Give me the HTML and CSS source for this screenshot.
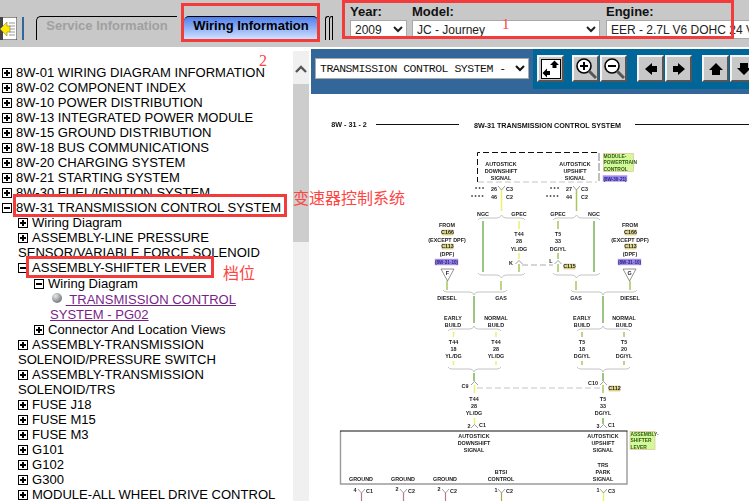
FILE: index.html
```html
<!DOCTYPE html>
<html lang="en">
<head>
<meta charset="utf-8">
<title>Wiring Information</title>
<link rel="stylesheet" href="styles.css">
</head>
<body>
<div class="page">
  <header class="header">
    <svg class="logo" width="17" height="23" viewBox="0 0 17 23">
      <rect x="0" y="0" width="17" height="23" fill="#fff" stroke="#222"/>
      <rect x="0" y="0" width="3" height="23" fill="#444"/>
      <path d="M9 6h6M9 9h6M9 12h6M9 15h6M9 18h6" stroke="#999"/>
      <path d="M0 12 L7 5 V9 H10 V15 H7 V19 Z" fill="#ffe800" stroke="#665" stroke-width=".5"/>
    </svg>
    <div class="divider"></div>
    <div class="tab tab-off">Service Information</div>
    <div class="tab tab-on">Wiring Information</div>
    <div class="stub"></div>
    <div class="stub stub-b"></div>
    <div class="field field-year">
      <label class="field-label">Year:</label>
      <select class="field-select"><option>2009</option></select>
    </div>
    <div class="field field-model">
      <label class="field-label">Model:</label>
      <select class="field-select"><option>JC - Journey</option></select>
    </div>
    <div class="field field-engine">
      <label class="field-label">Engine:</label>
      <select class="field-select"><option>EER - 2.7L V6 DOHC 24 VALVE</option></select>
    </div>
  </header>

  <main class="main">
    <nav class="tree">
      <div class="row"><span class="tg plus"></span>8W-01 WIRING DIAGRAM INFORMATION</div>
      <div class="row"><span class="tg plus"></span>8W-02 COMPONENT INDEX</div>
      <div class="row"><span class="tg plus"></span>8W-10 POWER DISTRIBUTION</div>
      <div class="row"><span class="tg plus"></span>8W-13 INTEGRATED POWER MODULE</div>
      <div class="row"><span class="tg plus"></span>8W-15 GROUND DISTRIBUTION</div>
      <div class="row"><span class="tg plus"></span>8W-18 BUS COMMUNICATIONS</div>
      <div class="row"><span class="tg plus"></span>8W-20 CHARGING SYSTEM</div>
      <div class="row"><span class="tg plus"></span>8W-21 STARTING SYSTEM</div>
      <div class="row"><span class="tg plus"></span>8W-30 FUEL/IGNITION SYSTEM</div>
      <div class="row"><span class="tg minus"></span>8W-31 TRANSMISSION CONTROL SYSTEM</div>
      <div class="row lvl1"><span class="tg plus"></span>Wiring Diagram</div>
      <div class="row lvl1"><span class="tg plus"></span>ASSEMBLY-LINE PRESSURE SENSOR/VARIABLE FORCE SOLENOID</div>
      <div class="row lvl1"><span class="tg minus"></span>ASSEMBLY-SHIFTER LEVER</div>
      <div class="row lvl2 row-gap"><span class="tg minus"></span>Wiring Diagram</div>
      <div class="row lvl3 row-gap"><span class="ball"></span> <a class="doc-link" href="#">&nbsp;TRANSMISSION CONTROL SYSTEM - PG02</a></div>
      <div class="row lvl2"><span class="tg plus"></span>Connector And Location Views</div>
      <div class="row lvl1"><span class="tg plus"></span>ASSEMBLY-TRANSMISSION SOLENOID/PRESSURE SWITCH</div>
      <div class="row lvl1"><span class="tg plus"></span>ASSEMBLY-TRANSMISSION SOLENOID/TRS</div>
      <div class="row lvl1"><span class="tg plus"></span>FUSE J18</div>
      <div class="row lvl1"><span class="tg plus"></span>FUSE M15</div>
      <div class="row lvl1"><span class="tg plus"></span>FUSE M3</div>
      <div class="row lvl1"><span class="tg plus"></span>G101</div>
      <div class="row lvl1"><span class="tg plus"></span>G102</div>
      <div class="row lvl1"><span class="tg plus"></span>G300</div>
      <div class="row lvl1"><span class="tg plus"></span>MODULE-ALL WHEEL DRIVE CONTROL</div>
    </nav>

    <div class="scrollbar">
      <div class="scroll-up">
        <svg width="16" height="12" viewBox="0 0 16 12"><path d="M3 9 L8 4 L13 9" fill="none" stroke="#555" stroke-width="2.4"/></svg>
      </div>
      <div class="scroll-thumb"></div>
    </div>

    <section class="viewer">
      <div class="toolbar">
        <div class="toolbar-left">
          <select class="page-select"><option>TRANSMISSION CONTROL SYSTEM - PG02</option></select>
        </div>
        <div class="toolbar-right">
          <button class="tool tool-first" type="button">
            <svg width="20" height="20" viewBox="0 0 20 20"><rect x=".5" y=".5" width="19" height="19" fill="#fff" stroke="#000"/><path d="M9 6 L13.5 1.5 L18 6 H15.5 V9 H11.5 V6 Z M1.5 14 L6 9.5 V12 H9 V16 H6 V18.5 Z" fill="#000"/></svg>
          </button>
          <button class="tool" type="button">
            <svg width="22" height="24" viewBox="0 0 22 24"><circle cx="9" cy="9" r="7" fill="#fff" stroke="#000" stroke-width="1.6"/><path d="M5 9h8M9 5v8" stroke="#000" stroke-width="2"/><path d="M14 14 L21 21" stroke="#555" stroke-width="3"/></svg>
          </button>
          <button class="tool tool-join" type="button">
            <svg width="22" height="24" viewBox="0 0 22 24"><circle cx="9" cy="9" r="7" fill="#fff" stroke="#000" stroke-width="1.6"/><path d="M5 9h8" stroke="#000" stroke-width="2"/><path d="M14 14 L21 21" stroke="#555" stroke-width="3"/></svg>
          </button>
          <button class="tool tool-group" type="button">
            <svg width="14" height="14" viewBox="0 0 14 14"><path d="M1 7 L8 1 V4 H13 V10 H8 V13 Z" fill="#000"/></svg>
          </button>
          <button class="tool tool-join" type="button">
            <svg width="14" height="14" viewBox="0 0 14 14"><path d="M13 7 L6 1 V4 H1 V10 H6 V13 Z" fill="#000"/></svg>
          </button>
          <button class="tool tool-group" type="button">
            <svg width="16" height="14" viewBox="0 0 16 14"><path d="M8 1 L15 8 H12 V13 H4 V8 H1 Z" fill="#000"/></svg>
          </button>
          <button class="tool tool-join" type="button">
            <svg width="16" height="14" viewBox="0 0 16 14"><path d="M8 13 L15 6 H12 V1 H4 V6 H1 Z" fill="#000"/></svg>
          </button>
        </div>
      </div>

      <svg class="diagram" width="438" height="407" viewBox="311 94 438 407">
        <!-- page heading -->
        <text class="t t-head" x="349" y="127" text-anchor="middle">8W - 31 - 2</text>
        <path class="rule" d="M376 124.5H459M635 124.5H749"/>
        <text class="t t-head" x="547.5" y="127.5" text-anchor="middle">8W-31 TRANSMISSION CONTROL SYSTEM</text>

        <!-- powertrain module -->
        <path class="dash-k" d="M597 152.5H477.5V182"/>
        <path class="dash-g" d="M478 182H597"/>
        <path class="bar" d="M599 153V181"/>
        <text class="t" x="501" y="165.500" text-anchor="middle">AUTOSTICK</text>
        <text class="t" x="501" y="172.500" text-anchor="middle">DOWNSHIFT</text>
        <text class="t" x="501" y="179.500" text-anchor="middle">SIGNAL</text>
        <text class="t" x="575" y="165.500" text-anchor="middle">AUTOSTICK</text>
        <text class="t" x="575" y="172.500" text-anchor="middle">UPSHIFT</text>
        <text class="t" x="575" y="179.500" text-anchor="middle">SIGNAL</text>
        <rect class="lab-g" x="603.500" y="153.500" width="30" height="18"/>
        <text class="t t-g" x="603.500" y="157.500">MODULE-</text>
        <text class="t t-g" x="603.500" y="164">POWERTRAIN</text>
        <text class="t t-g" x="603.500" y="170.500">CONTROL</text>
        <rect class="lab-b" x="603" y="175.500" width="24" height="6"/>
        <text class="t t-b" x="615" y="180.500" text-anchor="middle">(8W-30-21)</text>

        <!-- upper pins -->
        <text class="t t-star" x="475" y="191">***</text><text class="t" x="491" y="191">26</text><text class="t" x="506" y="191">C3</text>
        <text class="t t-star" x="471" y="199">****</text><text class="t" x="491" y="199">46</text><text class="t" x="506" y="199">C2</text>
        <text class="t t-star" x="550" y="191">***</text><text class="t" x="566" y="191">27</text><text class="t" x="581" y="191">C3</text>
        <text class="t t-star" x="546" y="199">****</text><text class="t" x="566" y="199">44</text><text class="t" x="581" y="199">C2</text>
        <path class="pin" d="M498 186L501.500 190L505 186M573 186L576.500 190L580 186"/>
        <path class="w-y" d="M501.500 190V211"/>
        <path class="w-gy" d="M576.500 190V211"/>

        <text class="t" x="483" y="216" text-anchor="middle">NGC</text>
        <text class="t" x="519" y="216" text-anchor="middle">GPEC</text>
        <text class="t" x="558" y="216" text-anchor="middle">GPEC</text>
        <text class="t" x="594" y="216" text-anchor="middle">NGC</text>
        <path class="brace" d="M478 220Q479 218 482 218H497Q500 218 501.500 215Q503 218 506 218H521Q524 218 525 220M553 220Q554 218 557 218H572Q575 218 576.500 215Q578 218 581 218H596Q599 218 600 220"/>

        <path class="w-g" d="M483 221V272M594 221V272"/>
        <path class="w-y" d="M519 221V229M519 253V259"/>
        <path class="w-gy" d="M558 221V229M558 253V259"/>
        <path class="w-gy" d="M519 264V272M558 264V272"/>
        <text class="t" x="519" y="236" text-anchor="middle">T44</text>
        <text class="t" x="519" y="243" text-anchor="middle">28</text>
        <text class="t" x="519" y="251" text-anchor="middle">YL/DG</text>
        <text class="t" x="558" y="236" text-anchor="middle">T5</text>
        <text class="t" x="558" y="243" text-anchor="middle">33</text>
        <text class="t" x="558" y="251" text-anchor="middle">DG/YL</text>
        <text class="t" x="511" y="265" text-anchor="middle">K</text>
        <text class="t" x="551" y="263" text-anchor="middle">L</text>
        <path class="pin" d="M515.500 264L519 260.500L522.500 264M554.500 264L558 260.500L561.500 264"/>
        <path class="dash-g thin" d="M522 265H553"/>
        <rect class="lab-o" x="564" y="264" width="11" height="5"/>
        <text class="t" x="569.500" y="268" text-anchor="middle">C115</text>
        <path class="brace" d="M478 273Q479 275 482 275H497Q500 275 501.500 278Q503 275 506 275H521Q524 275 525 273M553 273Q554 275 557 275H572Q575 275 576.500 278Q578 275 581 275H596Q599 275 600 273"/>

        <!-- FROM columns -->
        <g>
          <text class="t" x="447" y="227" text-anchor="middle">FROM</text>
          <rect class="lab-o" x="442" y="230" width="11" height="5"/>
          <text class="t" x="447.500" y="234" text-anchor="middle">C166</text>
          <text class="t" x="447" y="241.500" text-anchor="middle">(EXCEPT DPF)</text>
          <rect class="lab-o" x="442" y="244" width="11" height="5"/>
          <text class="t" x="447.500" y="248" text-anchor="middle">C113</text>
          <text class="t" x="447" y="256" text-anchor="middle">(DPF)</text>
          <rect class="lab-b" x="435" y="259" width="23" height="6"/>
          <text class="t t-b" x="446.500" y="264" text-anchor="middle">(8W-31-10)</text>
          <path class="tri" d="M441 269H454L447.500 281Z"/>
          <text class="t" x="447.500" y="274.500" text-anchor="middle">F</text>
        </g>
        <g>
          <text class="t" x="630" y="227" text-anchor="middle">FROM</text>
          <rect class="lab-o" x="625" y="230" width="11" height="5"/>
          <text class="t" x="630.500" y="234" text-anchor="middle">C166</text>
          <text class="t" x="630" y="241.500" text-anchor="middle">(EXCEPT DPF)</text>
          <rect class="lab-o" x="625" y="244" width="11" height="5"/>
          <text class="t" x="630.500" y="248" text-anchor="middle">C113</text>
          <text class="t" x="630" y="256" text-anchor="middle">(DPF)</text>
          <rect class="lab-b" x="618" y="259" width="23" height="6"/>
          <text class="t t-b" x="629.500" y="264" text-anchor="middle">(8W-31-10)</text>
          <path class="tri" d="M623 269H636L629.500 281Z"/>
          <text class="t" x="629.500" y="274.500" text-anchor="middle">G</text>
        </g>
        <path class="w-gy" d="M447 281V290M501 281V290M576 281V290M630 281V290"/>
        <path class="brace" d="M443 290Q444 292 447 292H470Q473 292 474 295Q475 292 478 292H503Q506 292 507 290M571 290Q572 292 575 292H600Q602 292 603 295Q604 292 607 292H633Q636 292 637 290"/>
        <text class="t" x="447" y="300" text-anchor="middle">DIESEL</text>
        <text class="t" x="501" y="300" text-anchor="middle">GAS</text>
        <text class="t" x="576" y="300" text-anchor="middle">GAS</text>
        <text class="t" x="630" y="300" text-anchor="middle">DIESEL</text>

        <path class="w-g" d="M474 296V323M603 296V323"/>

        <!-- builds -->
        <text class="t" x="453" y="320" text-anchor="middle">EARLY</text>
        <text class="t" x="453" y="327" text-anchor="middle">BUILD</text>
        <text class="t" x="496" y="320" text-anchor="middle">NORMAL</text>
        <text class="t" x="496" y="327" text-anchor="middle">BUILD</text>
        <text class="t" x="582" y="320" text-anchor="middle">EARLY</text>
        <text class="t" x="582" y="327" text-anchor="middle">BUILD</text>
        <text class="t" x="624" y="320" text-anchor="middle">NORMAL</text>
        <text class="t" x="624" y="327" text-anchor="middle">BUILD</text>
        <path class="brace" d="M448 331Q449 329 452 329H470Q473 329 474 326Q475 329 478 329H497Q500 329 501 331M577 331Q578 329 581 329H599Q602 329 603 326Q604 329 607 329H626Q629 329 630 331"/>
        <path class="w-y" d="M453.500 332V337M496 332V337M453.500 361V365M496 361V365"/>
        <path class="w-gy" d="M582 332V337M624 332V337M582 361V365M624 361V365"/>
        <text class="t" x="453.500" y="344" text-anchor="middle">T44</text>
        <text class="t" x="453.500" y="351" text-anchor="middle">18</text>
        <text class="t" x="453.500" y="358" text-anchor="middle">YL/DG</text>
        <text class="t" x="496" y="344" text-anchor="middle">T44</text>
        <text class="t" x="496" y="351" text-anchor="middle">28</text>
        <text class="t" x="496" y="358" text-anchor="middle">YL/DG</text>
        <text class="t" x="582" y="344" text-anchor="middle">T5</text>
        <text class="t" x="582" y="351" text-anchor="middle">18</text>
        <text class="t" x="582" y="358" text-anchor="middle">DG/YL</text>
        <text class="t" x="624" y="344" text-anchor="middle">T5</text>
        <text class="t" x="624" y="351" text-anchor="middle">20</text>
        <text class="t" x="624" y="358" text-anchor="middle">DG/YL</text>
        <path class="brace" d="M448 367Q449 369 452 369H470Q473 369 474 372Q475 369 478 369H497Q500 369 501 367M577 367Q578 369 581 369H599Q602 369 603 372Q604 369 607 369H626Q629 369 630 367"/>

        <!-- splice -->
        <path class="w-g" d="M474 373V381M603 373V381"/>
        <path class="pin" d="M471 385L474.500 381.500L478 385M600 385L603.500 381.500L607 385"/>
        <path class="w-y" d="M474.500 385V393"/>
        <path class="w-gy" d="M603 385V393"/>
        <text class="t" x="465" y="388" text-anchor="middle">C9</text>
        <text class="t" x="593" y="385" text-anchor="middle">C10</text>
        <path class="dash-g" d="M477 388H600"/>
        <rect class="lab-o" x="609" y="386" width="11" height="5"/>
        <text class="t" x="614.500" y="390" text-anchor="middle">C112</text>
        <text class="t" x="474" y="401" text-anchor="middle">T44</text>
        <text class="t" x="474" y="408" text-anchor="middle">28</text>
        <text class="t" x="474" y="415" text-anchor="middle">YL/DG</text>
        <text class="t" x="603" y="401" text-anchor="middle">T5</text>
        <text class="t" x="603" y="408" text-anchor="middle">33</text>
        <text class="t" x="603" y="415" text-anchor="middle">DG/YL</text>
        <path class="w-y" d="M474.500 418V424"/>
        <path class="w-g" d="M603 418V424"/>
        <path class="pin" d="M471 428L474.500 424.500L478 428M600 428L603.500 424.500L607 428"/>
        <text class="t" x="469" y="428" text-anchor="middle">2</text><text class="t" x="479" y="427">C1</text>
        <text class="t" x="598" y="428" text-anchor="middle">3</text><text class="t" x="608" y="427">C1</text>

        <!-- shifter lever assembly -->
        <path class="box-g" d="M340.500 431V484H627V431"/>
        <path class="box-k" d="M340 431H627.500"/>
        <rect class="lab-g" x="630" y="431.500" width="25" height="18"/>
        <text class="t t-g" x="630.500" y="435.500">ASSEMBLY-</text>
        <text class="t t-g" x="630.500" y="442">SHIFTER</text>
        <text class="t t-g" x="630.500" y="448.500">LEVER</text>
        <text class="t" x="474" y="438" text-anchor="middle">AUTOSTICK</text>
        <text class="t" x="474" y="445" text-anchor="middle">DOWNSHIFT</text>
        <text class="t" x="474" y="452" text-anchor="middle">SIGNAL</text>
        <text class="t" x="603" y="438" text-anchor="middle">AUTOSTICK</text>
        <text class="t" x="603" y="445" text-anchor="middle">UPSHIFT</text>
        <text class="t" x="603" y="452" text-anchor="middle">SIGNAL</text>
        <text class="t" x="603" y="467" text-anchor="middle">TRS</text>
        <text class="t" x="603" y="474" text-anchor="middle">PARK</text>
        <text class="t" x="603" y="481" text-anchor="middle">SIGNAL</text>
        <text class="t" x="501" y="474" text-anchor="middle">BTSI</text>
        <text class="t" x="501" y="481" text-anchor="middle">CONTROL</text>
        <text class="t" x="361" y="481" text-anchor="middle">GROUND</text>
        <text class="t" x="403" y="481" text-anchor="middle">GROUND</text>
        <text class="t" x="445" y="481" text-anchor="middle">GROUND</text>

        <!-- lower pins -->
        <path class="pin" d="M358 489L361.500 493L365 489M400 489L403.500 493L407 489M442 489L445.500 493L449 489M498 489L501.500 493L505 489M600 489L603.500 493L607 489"/>
        <text class="t" x="355" y="492" text-anchor="middle">4</text><text class="t" x="366" y="493">C1</text>
        <text class="t" x="397" y="491" text-anchor="middle">2</text><text class="t" x="408" y="493">C2</text>
        <text class="t" x="439" y="491" text-anchor="middle">2</text><text class="t" x="450" y="493">C2</text>
        <text class="t" x="496" y="492" text-anchor="middle">1</text><text class="t" x="506" y="493">C2</text>
        <text class="t" x="598" y="492" text-anchor="middle">1</text><text class="t" x="608" y="493">C3</text>
        <path class="w-p" d="M361.500 493V501M403.500 493V501M445.500 493V501"/>
        <path class="w-o" d="M501.500 493V501"/>
        <path class="w-y" d="M603.500 493V501"/>
      </svg>
    </section>
  </main>

  <!-- annotations drawn over the screenshot -->
  <div class="mark mark-tab"></div>
  <div class="mark mark-form"></div>
  <div class="mark mark-sys"></div>
  <div class="mark mark-lever"></div>
  <span class="note note-1">1</span>
  <span class="note note-2">2</span>
  <span class="note note-sys">变速器控制系统</span>
  <span class="note note-lever">档位</span>
</div>
</body>
</html>
```
FILE: styles.css
```css
html, body { margin: 0; padding: 0; }
body { background: #fff; font-family: "Liberation Sans", Arial, sans-serif; color: #000; }
.page { position: relative; width: 749px; height: 501px; overflow: hidden; }

/* header */
.header {
  display: flex; align-items: flex-start; height: 47px; margin-bottom: 2px;
  background: #c8c8c8; overflow: hidden;
}
.logo { flex: none; margin-top: 17px; }
.divider { flex: none; width: 2px; height: 23px; margin: 17px 12px 0 5px; background: #336699; }
.tab {
  flex: none; box-sizing: border-box; height: 24px; margin-top: 16px;
  font-size: 13px; font-weight: bold; line-height: 17px; text-align: center;
}
.tab-off {
  width: 141px; color: #a0a0a0;
  border-top: 1px solid #000; border-left: 1px solid #000; border-top-left-radius: 5px;
}
.tab-on {
  width: 134px; margin-left: 7px; color: #000;
  background: linear-gradient(#4f7fec, #d6e4ff);
  border-top: 1px solid #000; border-top-left-radius: 5px; border-top-right-radius: 5px;
}
.stub { flex: none; width: 4px; height: 24px; margin: 16px 0 0 7px; box-sizing: border-box; border-left: 1px solid #000; border-top: 1px solid #000; border-top-left-radius: 3px; }
.stub-b { margin-left: 0; border-right: 1px solid #000; }
.field { flex: none; display: flex; flex-direction: column; margin-top: 4px; }
.field-label { font-size: 13px; font-weight: bold; line-height: 16px; color: #111; }
.field-select {
  box-sizing: border-box; width: 100%; height: 19px; padding: 0;
  font: 12px "Liberation Sans", Arial, sans-serif; color: #222;
  background: #fff; border: 1px solid #a9a9a9; border-radius: 0;
}
.field-year { width: 57px; margin-left: 17px; }
.field-model { width: 188px; margin-left: 5px; }
.field-engine { width: 200px; margin-left: 6px; }

/* main split */
.main { display: flex; height: 452px; }
.tree {
  flex: none; box-sizing: border-box; width: 293px; padding: 16px 0 0 2px;
  font-size: 13.05px; line-height: 15px; color: #000; overflow: hidden;
}
.row { padding-right: 4px; }
.lvl1 { padding-left: 16px; }
.lvl2 { padding-left: 32px; }
.lvl3 { padding-left: 48px; padding-right: 30px; }
.row-gap { margin-top: 1px; }
.tg {
  display: inline-block; box-sizing: border-box; width: 10px; height: 10px; margin-right: 4px;
  border: 1px solid #000; background-repeat: no-repeat; vertical-align: -1px;
}
.plus {
  background-image: linear-gradient(#000, #000), linear-gradient(#000, #000);
  background-size: 6px 2px, 2px 6px; background-position: center, center;
}
.minus {
  background-image: linear-gradient(#000, #000);
  background-size: 6px 2px; background-position: center;
}
.ball {
  display: inline-block; width: 10px; height: 10px; margin-left: 2px; border-radius: 50%;
  background: radial-gradient(circle at 35% 30%, #e8e8e8, #8c8f94 60%, #55585c);
  vertical-align: 1px;
}
.doc-link { color: #7a1f8a; text-decoration: underline; }

/* scrollbar */
.scrollbar { flex: none; display: flex; flex-direction: column; width: 16px; height: 450px; margin-top: 2px; background: #f0f0f0; }
.scroll-up { display: flex; align-items: flex-start; justify-content: center; height: 33px; padding-top: 12px; box-sizing: border-box; }
.scroll-thumb { height: 158px; background: #cdcdcd; }

/* viewer */
.viewer { flex: none; width: 438px; margin-left: 2px; overflow: hidden; }
.toolbar { display: flex; align-items: flex-start; height: 45px; background: #336699; }
.toolbar-left { flex: none; width: 222px; padding: 9px 0 0 4px; box-sizing: border-box; }
.page-select {
  box-sizing: border-box; width: 214px; height: 21px; padding: 0;
  font: 11.5px "Liberation Mono", monospace; letter-spacing: -.5px; color: #111;
  background: #fff; border: 1px solid #a9a9a9; border-radius: 0;
}
.toolbar-right { flex: none; display: flex; width: 216px; height: 40px; padding: 6px 0 0 4px; box-sizing: border-box; background: #006699; overflow: hidden; }
.tool {
  flex: none; display: flex; align-items: center; justify-content: center; box-sizing: border-box;
  width: 27px; height: 27px; padding: 0; margin-left: 0;
  background: #c8c8c8; border: 2px solid; border-color: #f4f4f4 #555 #555 #f4f4f4;
}
.tool-first { margin-right: 8px; }
.tool-join { margin-left: 1px; }
.tool-group { margin-left: 10px; }

/* diagram */
.diagram { display: block; background: #fff; filter: blur(.3px); }
.t { font: bold 5.4px "Liberation Sans", Arial, sans-serif; fill: #222; }
.t-head { font-size: 7.2px; fill: #111; }
.t-g { fill: #2d5a12; font-size: 4.9px; }
.t-b { fill: #23237a; font-size: 4.6px; }
.t-star { letter-spacing: 1.4px; }
.rule { stroke: #111; stroke-width: 1.2; fill: none; }
.dash-k { stroke: #111; stroke-width: 1; stroke-dasharray: 6 3; fill: none; }
.dash-g { stroke: #c4c4c4; stroke-width: 1; stroke-dasharray: 6 3; fill: none; }
.thin { stroke: #aaa; }
.bar { stroke: #aaa; stroke-width: 1.5; stroke-dasharray: 8 2; fill: none; }
.lab-g { fill: #d3f99b; stroke: #e5b58e; stroke-width: .6; }
.lab-b { fill: #9b88f0; stroke: #c9a0d8; stroke-width: .5; }
.lab-o { fill: #d9e08a; stroke: #e5a06e; stroke-width: .5; }
.pin { stroke: #777; stroke-width: .7; fill: none; }
.brace { stroke: #bdbdbd; stroke-width: .9; fill: none; }
.tri { stroke: #666; stroke-width: .7; fill: #fff; }
.w-y { stroke: #eef06a; stroke-width: 1.5; fill: none; }
.w-g { stroke: #7eb35a; stroke-width: 1.5; fill: none; }
.w-gy { stroke: #a5c75e; stroke-width: 1.5; fill: none; }
.w-p { stroke: #b87a80; stroke-width: 1.2; fill: none; }
.w-o { stroke: #b5a24a; stroke-width: 1.2; fill: none; }
.box-g { stroke: #9a9a9a; stroke-width: 1.4; fill: none; }
.box-k { stroke: #111; stroke-width: 1.2; fill: none; }

/* annotation overlays */
.mark { position: absolute; box-sizing: border-box; border: 3px solid #f23c3c; }
.mark-tab { left: 181px; top: 3px; width: 139px; height: 39px; }
.mark-form { left: 342px; top: 0; width: 392px; height: 39px; }
.mark-sys { left: 13px; top: 194px; width: 274px; height: 23px; }
.mark-lever { left: 26px; top: 256px; width: 188px; height: 22px; }
.note { position: absolute; color: #f44; font-weight: normal; }
.note-1 { left: 502px; top: 15px; font: 15px/18px "Liberation Serif", serif; }
.note-2 { left: 259px; top: 52px; font: 16px/18px "Liberation Serif", serif; }
.note-sys { left: 293px; top: 187px; font: 16px/20px "Noto Sans CJK SC", sans-serif; }
.note-lever { left: 223px; top: 262px; font: 16px/20px "Noto Sans CJK SC", sans-serif; }
```
